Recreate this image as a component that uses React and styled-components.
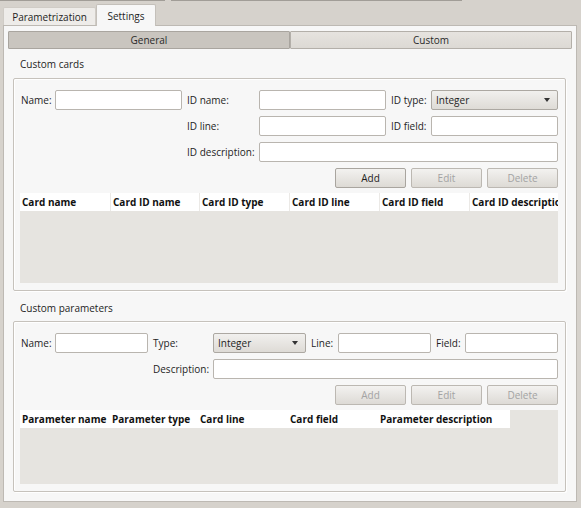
import React from 'react';
import styled, { createGlobalStyle } from 'styled-components';

const GlobalStyle = createGlobalStyle`
  body {
    margin: 0;
    background: #d6d2cc;
    font-family: "Open Sans", "Noto Sans", sans-serif;
    font-size: 10px;
    color: #1e1e1e;
  }
`;

const Page = styled.div`
  width: 581px;
  height: 508px;
  overflow: hidden;
  background: #d6d2cc;
`;

const TopEdge = styled.div`
  display: flex;
  gap: 6px;
  height: 2px;
`;

const EdgeLine = styled.div`
  width: ${(p) => p.$w}px;
  height: 1px;
  background: #a19d97;
`;

const TabBar = styled.div`
  display: flex;
  align-items: flex-end;
  height: 23px;
  padding-left: 3px;
`;

const Tab = styled.div`
  box-sizing: border-box;
  height: ${(p) => (p.$active ? 22 : 18)}px;
  width: ${(p) => p.$w}px;
  display: flex;
  align-items: center;
  justify-content: center;
  background: ${(p) => (p.$active ? '#f7f7f7' : '#eeece9')};
  border: 1px solid ${(p) => (p.$active ? '#c4c0ba' : '#d0ccc6')};
  border-bottom: none;
  border-radius: 2px 2px 0 0;
  margin-bottom: ${(p) => (p.$active ? -1 : 0)}px;
  position: relative;
  z-index: ${(p) => (p.$active ? 1 : 0)};
`;

const Panel = styled.div`
  box-sizing: border-box;
  margin-left: 3px;
  width: 574px;
  height: 477px;
  background: #f7f7f7;
  border: 1px solid #bdb9b3;
  padding: 5px 4px 0;
`;

const Segments = styled.div`
  display: grid;
  grid-template-columns: 282px 282px;
  height: 18px;
`;

const Segment = styled.div`
  box-sizing: border-box;
  display: flex;
  align-items: center;
  justify-content: center;
  background: ${(p) => (p.$active ? '#c9c5bf' : 'linear-gradient(#e6e3df, #dcd9d4)')};
  border: 1px solid ${(p) => (p.$active ? '#a9a59f' : '#b3afa9')};
  border-radius: 1px;
  color: #2a2a2a;
`;

const Section = styled.section`
  margin-top: ${(p) => p.$top}px;
`;

const SectionTitle = styled.div`
  height: 14px;
  line-height: 14px;
  padding-left: 12px;
  margin-bottom: ${(p) => p.$gap}px;
`;

const Frame = styled.div`
  box-sizing: border-box;
  margin-left: 5px;
  width: 553px;
  border: 1px solid #c6c2bc;
  box-shadow: inset 1px 1px 0 #ffffff, 1px 1px 0 #ffffff;
  border-radius: 2px;
  padding: 11px 7px 7px 6px;
  display: flex;
  flex-direction: column;
`;

const FormGrid = styled.div`
  display: grid;
  grid-template-columns: ${(p) => p.$cols};
  grid-auto-rows: 20px;
  column-gap: 5px;
  row-gap: 6px;
  margin-left: 1px;
`;

const Label = styled.label`
  display: flex;
  align-items: center;
  white-space: nowrap;
  grid-column: ${(p) => p.$col || 'auto'};
`;

const Input = styled.div`
  box-sizing: border-box;
  height: 20px;
  background: #ffffff;
  border: 1px solid #b9b5af;
  border-radius: 2px;
  grid-column: ${(p) => p.$span || 'auto'};
`;

const Combo = styled.div`
  box-sizing: border-box;
  height: 20px;
  display: flex;
  align-items: center;
  justify-content: space-between;
  padding: 0 7px 0 4px;
  background: linear-gradient(#f1f0ee, #dedbd6);
  border: 1px solid #aca8a2;
  border-radius: 2px;
`;

const Arrow = styled.span`
  width: 0;
  height: 0;
  border-left: 3.5px solid transparent;
  border-right: 3.5px solid transparent;
  border-top: 4px solid #333333;
`;

const ButtonRow = styled.div`
  display: flex;
  justify-content: flex-end;
  gap: 5px;
  margin-top: 6px;
`;

const Button = styled.button`
  box-sizing: border-box;
  width: 71px;
  height: 20px;
  padding: 0;
  font: inherit;
  color: ${(p) => (p.disabled ? '#a3a3a3' : '#1e1e1e')};
  background: linear-gradient(#f3f2f0, #dddad5);
  border: 1px solid ${(p) => (p.disabled ? '#bcb8b2' : '#a9a59f')};
  border-radius: 2px;
`;

const Table = styled.div`
  margin-top: 5px;
  background: #e6e4e0;
  overflow: hidden;
`;

const HeaderRow = styled.div`
  display: grid;
  grid-template-columns: ${(p) => p.$cols};
  height: 18px;
`;

const HeaderCell = styled.div`
  box-sizing: border-box;
  background: #ffffff;
  font-weight: bold;
  line-height: 18px;
  padding-left: 2px;
  white-space: nowrap;
  overflow: hidden;
  border-left: ${(p) => (p.$sep ? '1px solid #ebe9e6' : 'none')};
  color: #111111;
`;

const TableBody = styled.div`
  height: ${(p) => p.$h}px;
`;

const cardColumns = ['Card name', 'Card ID name', 'Card ID type', 'Card ID line', 'Card ID field', 'Card ID description'];
const paramColumns = ['Parameter name', 'Parameter type', 'Card line', 'Card field', 'Parameter description'];

export default function App() {
  return (
    <Page>
      <GlobalStyle />
      <TopEdge>
        <EdgeLine $w={165} />
        <EdgeLine $w={291} />
      </TopEdge>
      <TabBar>
        <Tab $w={93}>Parametrization</Tab>
        <Tab $w={60} $active>
          Settings
        </Tab>
      </TabBar>
      <Panel>
        <Segments>
          <Segment $active>General</Segment>
          <Segment>Custom</Segment>
        </Segments>

        <Section $top={8}>
          <SectionTitle $gap={7}>Custom cards</SectionTitle>
          <Frame>
            <FormGrid $cols="29px 127px 67px 127px 35px 127px">
              <Label>Name:</Label>
              <Input />
              <Label>ID name:</Label>
              <Input />
              <Label>ID type:</Label>
              <Combo>
                Integer
                <Arrow />
              </Combo>
              <Label $col="3">ID line:</Label>
              <Input />
              <Label>ID field:</Label>
              <Input />
              <Label $col="3">ID description:</Label>
              <Input $span="4 / 7" />
            </FormGrid>
            <ButtonRow>
              <Button>Add</Button>
              <Button disabled>Edit</Button>
              <Button disabled>Delete</Button>
            </ButtonRow>
            <Table>
              <HeaderRow $cols="90px 89px 90px 90px 90px 1fr">
                {cardColumns.map((c, i) => (
                  <HeaderCell key={c} $sep={i > 0}>
                    {c}
                  </HeaderCell>
                ))}
              </HeaderRow>
              <TableBody $h={72} />
            </Table>
          </Frame>
        </Section>

        <Section $top={10}>
          <SectionTitle $gap={6}>Custom parameters</SectionTitle>
          <Frame>
            <FormGrid $cols="29px 93px 55px 93px 22px 93px 24px 93px">
              <Label>Name:</Label>
              <Input />
              <Label>Type:</Label>
              <Combo>
                Integer
                <Arrow />
              </Combo>
              <Label>Line:</Label>
              <Input />
              <Label>Field:</Label>
              <Input />
              <Label $col="3">Description:</Label>
              <Input $span="4 / 9" />
            </FormGrid>
            <ButtonRow>
              <Button disabled>Add</Button>
              <Button disabled>Edit</Button>
              <Button disabled>Delete</Button>
            </ButtonRow>
            <Table>
              <HeaderRow $cols="90px 88px 90px 90px 132px">
                {paramColumns.map((c) => (
                  <HeaderCell key={c}>{c}</HeaderCell>
                ))}
              </HeaderRow>
              <TableBody $h={56} />
            </Table>
          </Frame>
        </Section>
      </Panel>
    </Page>
  );
}
